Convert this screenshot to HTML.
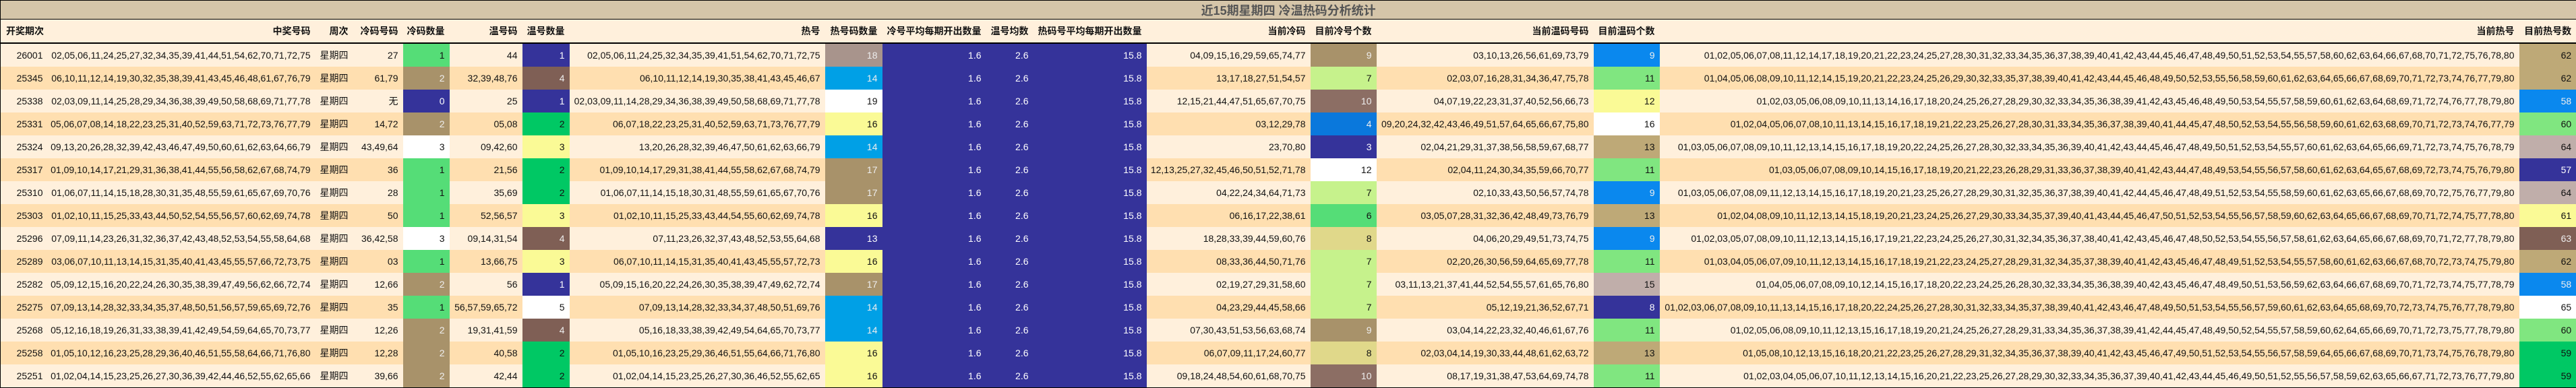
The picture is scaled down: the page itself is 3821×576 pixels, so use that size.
<!DOCTYPE html>
<html><head><meta charset="utf-8">
<style>
html,body{margin:0;padding:0;background:#fff0dc;}
body{width:3821px;height:576px;overflow:hidden;}
table{border-collapse:collapse;table-layout:fixed;width:3821px;border:1px solid #000;font-family:"Liberation Sans","Noto Sans CJK SC",sans-serif;font-size:14px;color:#111;}
td{padding:0 7px 0 0;text-align:right;white-space:nowrap;overflow:hidden;height:34px;}
tr.t td{height:27px;background:#d5c5a9;text-align:center;font-size:18px;font-weight:bold;color:#555;border-bottom:1px solid #000;padding:0;}
tr.h td{height:34px;background:#fff0dc;font-weight:bold;border-bottom:2px solid #000;}
tr.o td{background:#fff0dc;}
tr.e td{background:#ffdfb0;}
tr td.nv{background:#35339a;color:#fff;}
tr td.g1{background:#55dd77;}
tr td.tn{background:#a8926a;color:#eee;}
tr td.br{background:#7f5f55;color:#eee;}
tr td.gn{background:#00c864;}
tr td.wh{background:#fff;}
tr td.yl{background:#fafa96;}
tr td.gb{background:#a8948c;color:#eee;}
tr td.cy{background:#00a0e6;color:#eee;}
tr td.bl{background:#0a88ee;color:#eee;}
tr td.bl2{background:#0a78dc;color:#eee;}
tr td.lg{background:#c6f28c;}
tr td.mg{background:#80e680;}
tr td.bk{background:#8c6e64;color:#eee;}
tr td.kh{background:#e0d88a;}
tr td.ol{background:#bea977;}
tr td.pk{background:#c0aeaa;}
td.l{text-align:left;padding-left:8px;}
</style></head><body>
<table>
<colgroup><col style="width:70px"><col style="width:397px"><col style="width:56px"><col style="width:74px"><col style="width:69px"><col style="width:108px"><col style="width:70px"><col style="width:379px"><col style="width:85px"><col style="width:154px"><col style="width:70px"><col style="width:168px"><col style="width:243px"><col style="width:98px"><col style="width:322px"><col style="width:98px"><col style="width:1275px"><col style="width:85px"></colgroup>
<tr class="t"><td colspan="18">近15期星期四 冷温热码分析统计</td></tr>
<tr class="h"><td class="l">开奖期次</td><td>中奖号码</td><td>周次</td><td>冷码号码</td><td>冷码数量</td><td>温号码</td><td>温号数量</td><td>热号</td><td>热号码数量</td><td>冷号平均每期开出数量</td><td>温号均数</td><td>热码号平均每期开出数量</td><td>当前冷码</td><td>目前冷号个数</td><td>当前温码号码</td><td>目前温码个数</td><td>当前热号</td><td>目前热号数</td></tr>
<tr class="o"><td>26001</td><td>02,05,06,11,24,25,27,32,34,35,39,41,44,51,54,62,70,71,72,75</td><td>星期四</td><td>27</td><td class="g1">1</td><td>44</td><td class="nv">1</td><td>02,05,06,11,24,25,32,34,35,39,41,51,54,62,70,71,72,75</td><td class="gb">18</td><td class="nv">1.6</td><td class="nv">2.6</td><td class="nv">15.8</td><td>04,09,15,16,29,59,65,74,77</td><td class="tn">9</td><td>03,10,13,26,56,61,69,73,79</td><td class="bl">9</td><td>01,02,05,06,07,08,11,12,14,17,18,19,20,21,22,23,24,25,27,28,30,31,32,33,34,35,36,37,38,39,40,41,42,43,44,45,46,47,48,49,50,51,52,53,54,55,57,58,60,62,63,64,66,67,68,70,71,72,75,76,78,80</td><td class="ol">62</td></tr>
<tr class="e"><td>25345</td><td>06,10,11,12,14,19,30,32,35,38,39,41,43,45,46,48,61,67,76,79</td><td>星期四</td><td>61,79</td><td class="tn">2</td><td>32,39,48,76</td><td class="br">4</td><td>06,10,11,12,14,19,30,35,38,41,43,45,46,67</td><td class="cy">14</td><td class="nv">1.6</td><td class="nv">2.6</td><td class="nv">15.8</td><td>13,17,18,27,51,54,57</td><td class="lg">7</td><td>02,03,07,16,28,31,34,36,47,75,78</td><td class="mg">11</td><td>01,04,05,06,08,09,10,11,12,14,15,19,20,21,22,23,24,25,26,29,30,32,33,35,37,38,39,40,41,42,43,44,45,46,48,49,50,52,53,55,56,58,59,60,61,62,63,64,65,66,67,68,69,70,71,72,73,74,76,77,79,80</td><td class="ol">62</td></tr>
<tr class="o"><td>25338</td><td>02,03,09,11,14,25,28,29,34,36,38,39,49,50,58,68,69,71,77,78</td><td>星期四</td><td>无</td><td class="nv">0</td><td>25</td><td class="nv">1</td><td>02,03,09,11,14,28,29,34,36,38,39,49,50,58,68,69,71,77,78</td><td class="wh">19</td><td class="nv">1.6</td><td class="nv">2.6</td><td class="nv">15.8</td><td>12,15,21,44,47,51,65,67,70,75</td><td class="bk">10</td><td>04,07,19,22,23,31,37,40,52,56,66,73</td><td class="yl">12</td><td>01,02,03,05,06,08,09,10,11,13,14,16,17,18,20,24,25,26,27,28,29,30,32,33,34,35,36,38,39,41,42,43,45,46,48,49,50,53,54,55,57,58,59,60,61,62,63,64,68,69,71,72,74,76,77,78,79,80</td><td class="bl">58</td></tr>
<tr class="e"><td>25331</td><td>05,06,07,08,14,18,22,23,25,31,40,52,59,63,71,72,73,76,77,79</td><td>星期四</td><td>14,72</td><td class="tn">2</td><td>05,08</td><td class="gn">2</td><td>06,07,18,22,23,25,31,40,52,59,63,71,73,76,77,79</td><td class="yl">16</td><td class="nv">1.6</td><td class="nv">2.6</td><td class="nv">15.8</td><td>03,12,29,78</td><td class="bl2">4</td><td>09,20,24,32,42,43,46,49,51,57,64,65,66,67,75,80</td><td class="wh">16</td><td>01,02,04,05,06,07,08,10,11,13,14,15,16,17,18,19,21,22,23,25,26,27,28,30,31,33,34,35,36,37,38,39,40,41,44,45,47,48,50,52,53,54,55,56,58,59,60,61,62,63,68,69,70,71,72,73,74,76,77,79</td><td class="mg">60</td></tr>
<tr class="o"><td>25324</td><td>09,13,20,26,28,32,39,42,43,46,47,49,50,60,61,62,63,64,66,79</td><td>星期四</td><td>43,49,64</td><td class="wh">3</td><td>09,42,60</td><td class="yl">3</td><td>13,20,26,28,32,39,46,47,50,61,62,63,66,79</td><td class="cy">14</td><td class="nv">1.6</td><td class="nv">2.6</td><td class="nv">15.8</td><td>23,70,80</td><td class="nv">3</td><td>02,04,21,29,31,37,38,56,58,59,67,68,77</td><td class="ol">13</td><td>01,03,05,06,07,08,09,10,11,12,13,14,15,16,17,18,19,20,22,24,25,26,27,28,30,32,33,34,35,36,39,40,41,42,43,44,45,46,47,48,49,50,51,52,53,54,55,57,60,61,62,63,64,65,66,69,71,72,73,74,75,76,78,79</td><td class="pk">64</td></tr>
<tr class="e"><td>25317</td><td>01,09,10,14,17,21,29,31,36,38,41,44,55,56,58,62,67,68,74,79</td><td>星期四</td><td>36</td><td class="g1">1</td><td>21,56</td><td class="gn">2</td><td>01,09,10,14,17,29,31,38,41,44,55,58,62,67,68,74,79</td><td class="tn">17</td><td class="nv">1.6</td><td class="nv">2.6</td><td class="nv">15.8</td><td>12,13,25,27,32,45,46,50,51,52,71,78</td><td class="wh">12</td><td>02,04,11,24,30,34,35,59,66,70,77</td><td class="mg">11</td><td>01,03,05,06,07,08,09,10,14,15,16,17,18,19,20,21,22,23,26,28,29,31,33,36,37,38,39,40,41,42,43,44,47,48,49,53,54,55,56,57,58,60,61,62,63,64,65,67,68,69,72,73,74,75,76,79,80</td><td class="nv">57</td></tr>
<tr class="o"><td>25310</td><td>01,06,07,11,14,15,18,28,30,31,35,48,55,59,61,65,67,69,70,76</td><td>星期四</td><td>28</td><td class="g1">1</td><td>35,69</td><td class="gn">2</td><td>01,06,07,11,14,15,18,30,31,48,55,59,61,65,67,70,76</td><td class="tn">17</td><td class="nv">1.6</td><td class="nv">2.6</td><td class="nv">15.8</td><td>04,22,24,34,64,71,73</td><td class="lg">7</td><td>02,10,33,43,50,56,57,74,78</td><td class="bl">9</td><td>01,03,05,06,07,08,09,11,12,13,14,15,16,17,18,19,20,21,23,25,26,27,28,29,30,31,32,35,36,37,38,39,40,41,42,44,45,46,47,48,49,51,52,53,54,55,58,59,60,61,62,63,65,66,67,68,69,70,72,75,76,77,79,80</td><td class="pk">64</td></tr>
<tr class="e"><td>25303</td><td>01,02,10,11,15,25,33,43,44,50,52,54,55,56,57,60,62,69,74,78</td><td>星期四</td><td>50</td><td class="g1">1</td><td>52,56,57</td><td class="yl">3</td><td>01,02,10,11,15,25,33,43,44,54,55,60,62,69,74,78</td><td class="yl">16</td><td class="nv">1.6</td><td class="nv">2.6</td><td class="nv">15.8</td><td>06,16,17,22,38,61</td><td class="g1">6</td><td>03,05,07,28,31,32,36,42,48,49,73,76,79</td><td class="ol">13</td><td>01,02,04,08,09,10,11,12,13,14,15,18,19,20,21,23,24,25,26,27,29,30,33,34,35,37,39,40,41,43,44,45,46,47,50,51,52,53,54,55,56,57,58,59,60,62,63,64,65,66,67,68,69,70,71,72,74,75,77,78,80</td><td class="yl">61</td></tr>
<tr class="o"><td>25296</td><td>07,09,11,14,23,26,31,32,36,37,42,43,48,52,53,54,55,58,64,68</td><td>星期四</td><td>36,42,58</td><td class="wh">3</td><td>09,14,31,54</td><td class="br">4</td><td>07,11,23,26,32,37,43,48,52,53,55,64,68</td><td class="nv">13</td><td class="nv">1.6</td><td class="nv">2.6</td><td class="nv">15.8</td><td>18,28,33,39,44,59,60,76</td><td class="kh">8</td><td>04,06,20,29,49,51,73,74,75</td><td class="bl">9</td><td>01,02,03,05,07,08,09,10,11,12,13,14,15,16,17,19,21,22,23,24,25,26,27,30,31,32,34,35,36,37,38,40,41,42,43,45,46,47,48,50,52,53,54,55,56,57,58,61,62,63,64,65,66,67,68,69,70,71,72,77,78,79,80</td><td class="br">63</td></tr>
<tr class="e"><td>25289</td><td>03,06,07,10,11,13,14,15,31,35,40,41,43,45,55,57,66,72,73,75</td><td>星期四</td><td>03</td><td class="g1">1</td><td>13,66,75</td><td class="yl">3</td><td>06,07,10,11,14,15,31,35,40,41,43,45,55,57,72,73</td><td class="yl">16</td><td class="nv">1.6</td><td class="nv">2.6</td><td class="nv">15.8</td><td>08,33,36,44,50,71,76</td><td class="lg">7</td><td>02,20,26,30,56,59,64,65,69,77,78</td><td class="mg">11</td><td>01,03,04,05,06,07,09,10,11,12,13,14,15,16,17,18,19,21,22,23,24,25,27,28,29,31,32,34,35,37,38,39,40,41,42,43,45,46,47,48,49,51,52,53,54,55,57,58,60,61,62,63,66,67,68,70,72,73,74,75,79,80</td><td class="ol">62</td></tr>
<tr class="o"><td>25282</td><td>05,09,12,15,16,20,22,24,26,30,35,38,39,47,49,56,62,66,72,74</td><td>星期四</td><td>12,66</td><td class="tn">2</td><td>56</td><td class="nv">1</td><td>05,09,15,16,20,22,24,26,30,35,38,39,47,49,62,72,74</td><td class="tn">17</td><td class="nv">1.6</td><td class="nv">2.6</td><td class="nv">15.8</td><td>02,19,27,29,31,58,60</td><td class="lg">7</td><td>03,11,13,21,37,41,44,52,54,55,57,61,65,76,80</td><td class="pk">15</td><td>01,04,05,06,07,08,09,10,12,14,15,16,17,18,20,22,23,24,25,26,28,30,32,33,34,35,36,38,39,40,42,43,45,46,47,48,49,50,51,53,56,59,62,63,64,66,67,68,69,70,71,72,73,74,75,77,78,79</td><td class="bl">58</td></tr>
<tr class="e"><td>25275</td><td>07,09,13,14,28,32,33,34,35,37,48,50,51,56,57,59,65,69,72,76</td><td>星期四</td><td>35</td><td class="g1">1</td><td>56,57,59,65,72</td><td class="wh">5</td><td>07,09,13,14,28,32,33,34,37,48,50,51,69,76</td><td class="cy">14</td><td class="nv">1.6</td><td class="nv">2.6</td><td class="nv">15.8</td><td>04,23,29,44,45,58,66</td><td class="lg">7</td><td>05,12,19,21,36,52,67,71</td><td class="nv">8</td><td>01,02,03,06,07,08,09,10,11,13,14,15,16,17,18,20,22,24,25,26,27,28,30,31,32,33,34,35,37,38,39,40,41,42,43,46,47,48,49,50,51,53,54,55,56,57,59,60,61,62,63,64,65,68,69,70,72,73,74,75,76,77,78,79,80</td><td class="wh">65</td></tr>
<tr class="o"><td>25268</td><td>05,12,16,18,19,26,31,33,38,39,41,42,49,54,59,64,65,70,73,77</td><td>星期四</td><td>12,26</td><td class="tn">2</td><td>19,31,41,59</td><td class="br">4</td><td>05,16,18,33,38,39,42,49,54,64,65,70,73,77</td><td class="cy">14</td><td class="nv">1.6</td><td class="nv">2.6</td><td class="nv">15.8</td><td>07,30,43,51,53,56,63,68,74</td><td class="tn">9</td><td>03,04,14,22,23,32,40,46,61,67,76</td><td class="mg">11</td><td>01,02,05,06,08,09,10,11,12,13,15,16,17,18,19,20,21,24,25,26,27,28,29,31,33,34,35,36,37,38,39,41,42,44,45,47,48,49,50,52,54,55,57,58,59,60,62,64,65,66,69,70,71,72,73,75,77,78,79,80</td><td class="mg">60</td></tr>
<tr class="e"><td>25258</td><td>01,05,10,12,16,23,25,28,29,36,40,46,51,55,58,64,66,71,76,80</td><td>星期四</td><td>12,28</td><td class="tn">2</td><td>40,58</td><td class="gn">2</td><td>01,05,10,16,23,25,29,36,46,51,55,64,66,71,76,80</td><td class="yl">16</td><td class="nv">1.6</td><td class="nv">2.6</td><td class="nv">15.8</td><td>06,07,09,11,17,24,60,77</td><td class="kh">8</td><td>02,03,04,14,19,30,33,44,48,61,62,63,72</td><td class="ol">13</td><td>01,05,08,10,12,13,15,16,18,20,21,22,23,25,26,27,28,29,31,32,34,35,36,37,38,39,40,41,42,43,45,46,47,49,50,51,52,53,54,55,56,57,58,59,64,65,66,67,68,69,70,71,73,74,75,76,78,79,80</td><td class="gn">59</td></tr>
<tr class="o"><td>25251</td><td>01,02,04,14,15,23,25,26,27,30,36,39,42,44,46,52,55,62,65,66</td><td>星期四</td><td>39,66</td><td class="tn">2</td><td>42,44</td><td class="gn">2</td><td>01,02,04,14,15,23,25,26,27,30,36,46,52,55,62,65</td><td class="yl">16</td><td class="nv">1.6</td><td class="nv">2.6</td><td class="nv">15.8</td><td>09,18,24,48,54,60,61,68,70,75</td><td class="bk">10</td><td>08,17,19,31,38,47,53,64,69,74,78</td><td class="mg">11</td><td>01,02,03,04,05,06,07,10,11,12,13,14,15,16,20,21,22,23,25,26,27,28,29,30,32,33,34,35,36,37,39,40,41,42,43,44,45,46,49,50,51,52,55,56,57,58,59,62,63,65,66,67,71,72,73,76,77,79,80</td><td class="gn">59</td></tr>
</table>
</body></html>
